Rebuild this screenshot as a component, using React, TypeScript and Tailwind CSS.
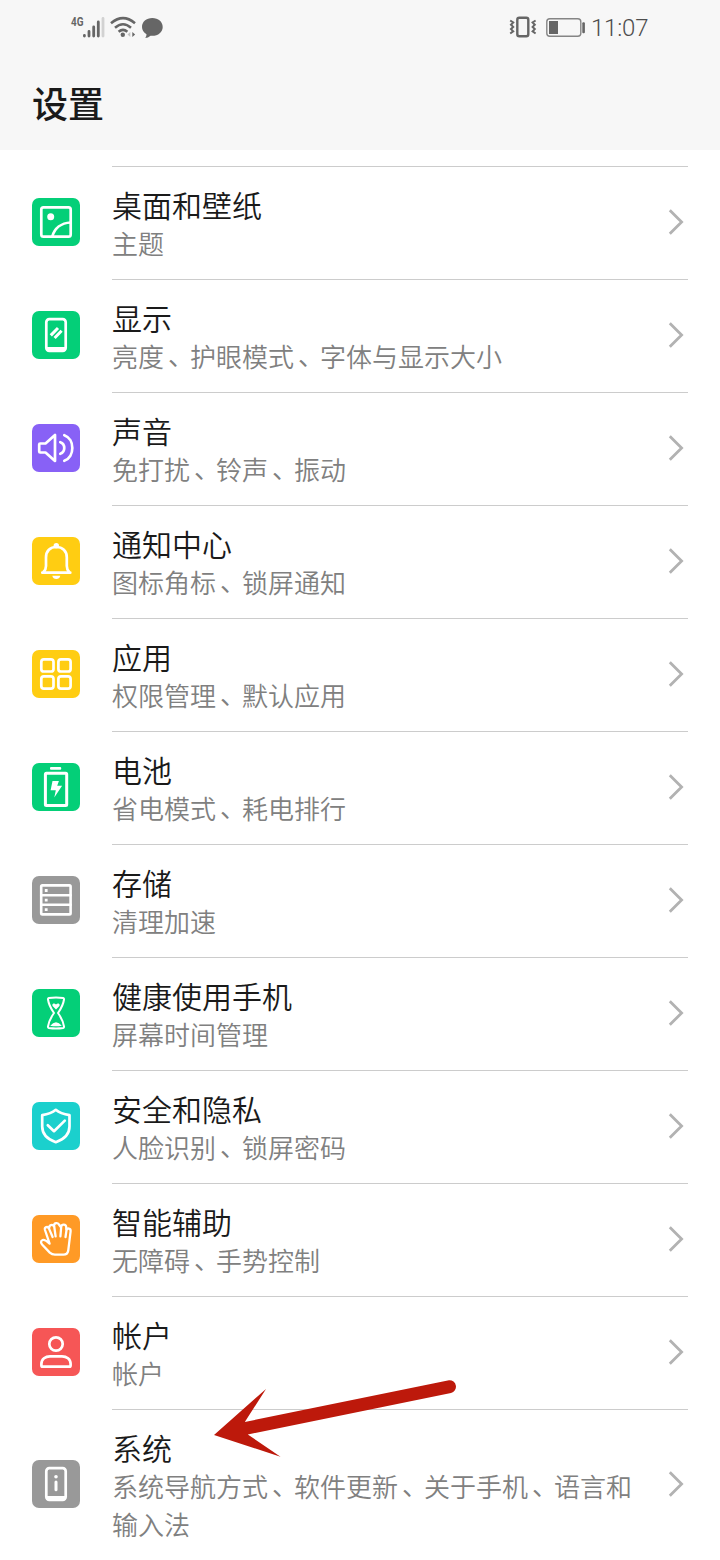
import type { ReactNode } from "react";

type Item = {
  title: string;
  subtitle: string;
  color: string;
  icon: ReactNode;
};

const items: Item[] = [
  {
    title: "桌面和壁纸",
    subtitle: "主题",
    color: "bg-[#04cf78]",
    icon: (
      <>
        <rect x="9.3" y="9.3" width="29.4" height="29.4" rx="2.2" />
        <circle cx="18.7" cy="18.7" r="3.5" fill="white" stroke="none" />
        <path d="M20.3 38.5C22.5 30.5 29 25 38.7 24.5" />
      </>
    ),
  },
  {
    title: "显示",
    subtitle: "亮度、护眼模式、字体与显示大小",
    color: "bg-[#04cf78]",
    icon: (
      <>
        <rect x="14.3" y="8.2" width="19.4" height="31.6" rx="3" />
        <path d="M15 36h18v2.5q0 1.5-1.5 1.5h-15q-1.5 0-1.5-1.5z" fill="white" stroke="none" />
        <path d="M18.8 24.4l7.2-7.4M22.6 27l7-7.2" strokeLinecap="butt" strokeWidth="3" />
      </>
    ),
  },
  {
    title: "声音",
    subtitle: "免打扰、铃声、振动",
    color: "bg-[#8861f6]",
    icon: (
      <>
        <path d="M8.2 19.5h5.3L23 11v26l-9.5-8.5H8.2Q7.2 28.5 7.2 27.5V20.5Q7.2 19.5 8.2 19.5z" />
        <path d="M28.3 18.2C33.6 20 33.6 28 28.3 29.8M32.3 11.2C43 15 43 33 32.3 36.8" />
      </>
    ),
  },
  {
    title: "通知中心",
    subtitle: "图标角标、锁屏通知",
    color: "bg-[#ffcd12]",
    icon: (
      <>
        <path d="M10.3 35.7h28M11.5 35Q14 32.5 14 29V20.5C14 14 18.2 10 24.3 10S34.8 14 34.8 20.5V29Q34.8 32.5 37.2 35" />
        <circle cx="24.3" cy="8.7" r="2.7" fill="white" stroke="none" />
        <path d="M20.3 38.8h8Q27.5 42 24.3 42T20.3 38.8z" fill="white" stroke="none" />
      </>
    ),
  },
  {
    title: "应用",
    subtitle: "权限管理、默认应用",
    color: "bg-[#ffcd12]",
    icon: (
      <>
        <rect x="9.3" y="9.3" width="12.2" height="12.2" rx="2.6" />
        <rect x="26.4" y="9.3" width="12.2" height="12.2" rx="2.6" />
        <rect x="9.3" y="26.4" width="12.2" height="12.2" rx="2.6" />
        <rect x="26.4" y="26.4" width="12.2" height="12.2" rx="2.6" />
      </>
    ),
  },
  {
    title: "电池",
    subtitle: "省电模式、耗电排行",
    color: "bg-[#04cf78]",
    icon: (
      <>
        <rect x="18" y="4" width="11.2" height="2.8" rx="1" fill="white" stroke="none" />
        <rect x="13.4" y="10.3" width="21.3" height="32.3" rx="1" strokeWidth="3" />
        <path d="M20.5 18h6.4l-1.7 4.8h4.9L22.3 34.5l1.5-7.3h-5.2z" fill="white" stroke="none" />
      </>
    ),
  },
  {
    title: "存储",
    subtitle: "清理加速",
    color: "bg-[#999999]",
    icon: (
      <>
        <rect x="9.2" y="9.4" width="29.4" height="29" rx="1.2" strokeWidth="2.6" />
        <path d="M9.2 19.2h29.4M9.2 28.8h29.4" strokeWidth="2.6" />
        <path d="M12.8 13.1h2.8v2.8h-2.8zM12.8 22.7h2.8v2.8h-2.8zM12.8 32.3h2.8v2.8h-2.8z" fill="white" stroke="none" />
      </>
    ),
  },
  {
    title: "健康使用手机",
    subtitle: "屏幕时间管理",
    color: "bg-[#04cf78]",
    icon: (
      <>
        <path
          d="M16.8 9Q24 8 31.2 9Q32.2 9.2 32 10.5C31.2 16.5 28.8 20 26 24C28.8 28 31.2 31.5 32 37.5Q32.2 38.8 31.2 39Q24 40 16.8 39Q15.8 38.8 16 37.5C16.8 31.5 19.2 28 22 24C19.2 20 16.8 16.5 16 10.5Q15.8 9.2 16.8 9z"
          strokeWidth="2"
        />
        <path
          d="M24 20.6L20.8 17.3C19.2 15.3 21.8 13.2 24 15.4C26.2 13.2 28.8 15.3 27.2 17.3zM18.2 36.7Q21 33.2 24 33.2T29.8 36.7Q24 38 18.2 36.7z"
          fill="white"
          stroke="none"
        />
      </>
    ),
  },
  {
    title: "安全和隐私",
    subtitle: "人脸识别、锁屏密码",
    color: "bg-[#1bd0cd]",
    icon: (
      <>
        <path d="M23.8 7.8Q28.5 11.8 37.5 13.2V24.5C37.5 32.5 31.5 37.5 23.8 40.2C16 37.5 10.2 32.5 10.2 24.5V13.2Q19 11.8 23.8 7.8z" />
        <path d="M15.8 23.3l6.2 5.9L32.8 18.6" />
      </>
    ),
  },
  {
    title: "智能辅助",
    subtitle: "无障碍、手势控制",
    color: "bg-[#ff9a26]",
    icon: (
      <path
        d="M20.6 22L16.9 13.4C15.6 10.8 12.2 12.2 13 15L17.6 28.6C14.5 25.8 12.6 24.5 10.6 25C8.4 25.8 8.7 28.1 10.3 29.7L17.8 37.6Q20 39.7 23 39.7H31.5Q35.5 39.7 36.2 35.8L38.6 16.3C39 13.3 35.2 12.5 34.5 15.2L33.5 22M34.3 15L34.2 12.1C34 9 29.7 8.9 29.2 11.8L28.4 21.3M28.8 12L27.3 10C26.2 7.2 22 7.7 22.1 10.6L23.6 21.3M22.4 12L21.8 11.2C20.7 9 17 9.8 17.2 12.8"
        strokeWidth="2.3"
      />
    ),
  },
  {
    title: "帐户",
    subtitle: "帐户",
    color: "bg-[#f65656]",
    icon: (
      <>
        <circle cx="24" cy="16" r="6.7" />
        <path d="M9.4 37V35.8C9.4 31 13.5 28.3 18 28.3H30C34.5 28.3 38.6 31 38.6 35.8V37.5Q38.6 38.7 37.4 38.7H10.6Q9.4 38.7 9.4 37.5z" />
      </>
    ),
  },
  {
    title: "系统",
    subtitle: "系统导航方式、软件更新、关于手机、语言和输入法",
    color: "bg-[#999999]",
    icon: (
      <>
        <rect x="14.3" y="8.2" width="19.4" height="31.6" rx="3" />
        <path d="M15 36h18v2.5q0 1.5-1.5 1.5h-15q-1.5 0-1.5-1.5z" fill="white" stroke="none" />
        <circle cx="24" cy="16.7" r="1.8" fill="white" stroke="none" />
        <path d="M24 21.9v7.8" strokeWidth="3" />
      </>
    ),
  },
];

function StatusBar() {
  return (
    <div className="flex h-14 items-center justify-between pr-[71px] pl-[70px] text-[#666666]">
      <svg width="94" height="28" viewBox="70 14 94 28" fill="none" stroke="currentColor" className="shrink-0">
        <text
          x="71"
          y="26"
          fontSize="13"
          fontWeight="700"
          textLength="12.5"
          lengthAdjust="spacingAndGlyphs"
          fill="currentColor"
          stroke="none"
          fontFamily="Roboto, sans-serif"
        >
          4G
        </text>
        <g strokeWidth="2.8" strokeLinecap="round">
          <path d="M84.4 35.5V36M89 31.5V36M93.7 27V36M98.3 22V36" />
          <path d="M103 18.5V36" stroke="#d2d2d2" />
        </g>
        <g strokeWidth="2.5">
          <path d="M111 23.3Q123 13 135 23.3M115 27.8Q123 20.7 131 27.8M118.6 31.8Q123 28 127.4 31.8" />
          <circle cx="122.8" cy="34.8" r="2.2" fill="currentColor" stroke="none" />
          <path d="M130.3 32v5l-2.8-2.5z" fill="#c4c4c4" stroke="none" />
          <path d="M132.3 32v5l2.8-2.5z" fill="currentColor" stroke="none" />
        </g>
        <path
          d="M152.3 18C158.3 18 162.7 21.8 162.7 27S158.3 35.8 152.3 35.8L150.5 35.7Q148 38 145.3 38Q146.6 36.4 146.5 34.2Q142 31.5 142 27C142 21.8 146.3 18 152.3 18z"
          fill="currentColor"
          stroke="none"
        />
      </svg>
      <div className="flex items-center gap-[5px]">
        <svg width="77" height="28" viewBox="509 14 77 28" fill="none" stroke="currentColor">
          <rect x="517.3" y="17.7" width="11" height="18.6" rx="2" strokeWidth="2.4" />
          <path
            d="M510.2 20.5l3 2-2.2 2.2 2.2 2.2-2.2 2.2 2.2 2.2-3 2.2M535.6 20.5l-3 2 2.2 2.2-2.2 2.2 2.2 2.2-2.2 2.2 3 2.2"
            strokeWidth="2"
          />
          <rect x="546.8" y="18.7" width="34" height="17.6" rx="3" strokeWidth="1.4" stroke="#858585" />
          <rect x="549" y="21" width="9" height="13" fill="currentColor" stroke="none" />
          <rect x="582.3" y="22.3" width="2.6" height="11" rx="1" fill="currentColor" stroke="none" />
        </svg>
        <span className="w-[58px] font-[Roboto,sans-serif] text-[24px] leading-none font-light tracking-[-0.2px] text-[#4d4d4d]">
          11:07
        </span>
      </div>
    </div>
  );
}

// The enumeration comma is set half-width, with padding that brings it back to a full em
function Subtitle({ text }: { text: string }) {
  return (
    <p className="text-[26px] leading-[38px] font-[350] text-[#808080]">
      {text.split(/(、)/).map((part, i) =>
        part === "、" ? (
          <span key={i} className="relative -top-0.5 pr-[9px] pl-1 [font-feature-settings:'halt']">
            {part}
          </span>
        ) : (
          part
        )
      )}
    </p>
  );
}

function SettingRow({ item }: { item: Item }) {
  return (
    <li className="flex items-center gap-8 px-8">
      <span className={`mb-px size-12 shrink-0 rounded-[7px] ${item.color}`}>
        <svg
          width="48"
          height="48"
          viewBox="0 0 48 48"
          fill="none"
          stroke="white"
          strokeWidth="2.7"
          strokeLinecap="round"
          strokeLinejoin="round"
        >
          {item.icon}
        </svg>
      </span>
      <div className="flex flex-1 items-center border-t border-[#cccccc] pt-[18px] pb-[17px]">
        <div className="w-[522px]">
          <h2 className="mb-px text-[30px] leading-[38px] font-[350] text-[#1a1a1a]">{item.title}</h2>
          <Subtitle text={item.subtitle} />
        </div>
        <svg
          width="20"
          height="28"
          viewBox="0 0 20 28"
          fill="none"
          stroke="#b2b2b2"
          strokeWidth="2.8"
          className="mb-[3px] ml-auto w-5"
        >
          <path d="M1.8 2.2L13.6 14L1.8 25.8" />
        </svg>
      </div>
    </li>
  );
}

export default function App() {
  return (
    <main className="relative h-[1560px] w-[720px] overflow-hidden bg-white font-['Noto_Sans_CJK_SC',sans-serif]">
      <header className="h-[150px] bg-[#f7f7f7]">
        <StatusBar />
        <h1 className="px-8 pt-[19px] text-[36px] leading-[54px] font-medium text-[#1a1a1a]">设置</h1>
      </header>
      <ul className="pt-4">
        {items.map((item) => (
          <SettingRow key={item.title} item={item} />
        ))}
      </ul>
      <svg
        width="250"
        height="84"
        viewBox="210 1380 250 84"
        className="absolute top-[1380px] left-[210px] overflow-visible"
      >
        <path
          d="M214 1435L266 1389L244.8 1422L449 1380.2A6.5 6.5 0 0 1 451 1393L247.8 1434.4L280.5 1456.8z"
          fill="#bd190b"
        />
      </svg>
    </main>
  );
}
